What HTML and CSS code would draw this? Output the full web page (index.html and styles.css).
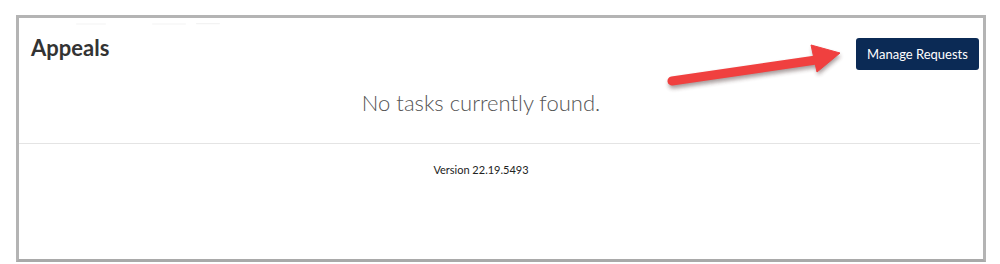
FILE: index.html
```html
<!DOCTYPE html>
<html>
<head>
<meta charset="utf-8">
<link rel="stylesheet" href="styles.css">
</head>
<body>
<div class="frame">
  <div class="panel">
    <div class="header">
      <h1 class="title">Appeals</h1>
      <button class="btn">Manage Requests</button>
    </div>
    <p class="message">No tasks currently found.</p>
    <div class="divider"></div>
    <p class="version">Version 22.19.5493</p>
  </div>
</div>
<svg class="overlay" width="1000" height="264" viewBox="0 0 1000 264">
  <defs>
    <filter id="sh" x="-20%" y="-50%" width="140%" height="200%">
      <feGaussianBlur stdDeviation="2"/>
    </filter>
  </defs>
  <g fill="#d0d0d0" opacity="0.25">
    <rect x="76" y="23.5" width="30" height="1" rx="0.5"/>
    <rect x="152" y="23.5" width="34" height="1" rx="0.5"/>
    <rect x="196" y="23" width="24" height="1.2" rx="0.6"/>
  </g>
  <g opacity="0.45" filter="url(#sh)" transform="translate(1,3)">
    <path d="M672 81 L816 60" stroke="#3a2020" stroke-width="9" stroke-linecap="round" fill="none"/>
    <path d="M811 45 L840 53 L817 72 Z" fill="#3a2020"/>
  </g>
  <path d="M672 81 L816 60" stroke="#f0403f" stroke-width="9" stroke-linecap="round" fill="none"/>
  <path d="M811 45 L840 53 L817 72 Z" fill="#f0403f" stroke="#f0403f" stroke-width="1" stroke-linejoin="round"/>
</svg>
</body>
</html>
```
FILE: styles.css
```css
html, body {
  margin: 0;
  padding: 0;
  background: #ffffff;
}
body {
  position: relative;
  width: 1000px;
  height: 264px;
  overflow: hidden;
  font-family: Lato, "Liberation Sans", sans-serif;
}
.frame {
  margin: 15px 0 0 16px;
  width: 964px;
  height: 241px;
  border: 3px solid #b4b4b4;
  border-bottom-color: #a9a9a9;
  background: #ffffff;
}
.panel {
  display: flex;
  flex-direction: column;
}
.header {
  display: flex;
  justify-content: space-between;
  align-items: flex-start;
  padding: 20px 4px 0 12px;
}
.title {
  margin: -3px 0 0 0;
  font-size: 22px;
  line-height: 26px;
  font-weight: 700;
  color: #333333;
}
.btn {
  width: 123px;
  height: 32px;
  border: none;
  border-radius: 3px;
  background: #0b2a55;
  color: #ffffff;
  font-family: Lato, "Liberation Sans", sans-serif;
  font-size: 13px;
  padding: 0;
}
.message {
  margin: 19px 40px 26px 0;
  text-align: center;
  font-size: 22px;
  line-height: 28px;
  font-weight: 300;
  color: #555555;
}
.divider {
  height: 1px;
  background: #e4e4e4;
  margin-right: 3px;
}
.version {
  margin: 19px 40px 0 0;
  text-align: center;
  font-size: 11px;
  line-height: 14px;
  color: #222222;
}
.overlay {
  position: absolute;
  left: 0;
  top: 0;
  pointer-events: none;
}
```
